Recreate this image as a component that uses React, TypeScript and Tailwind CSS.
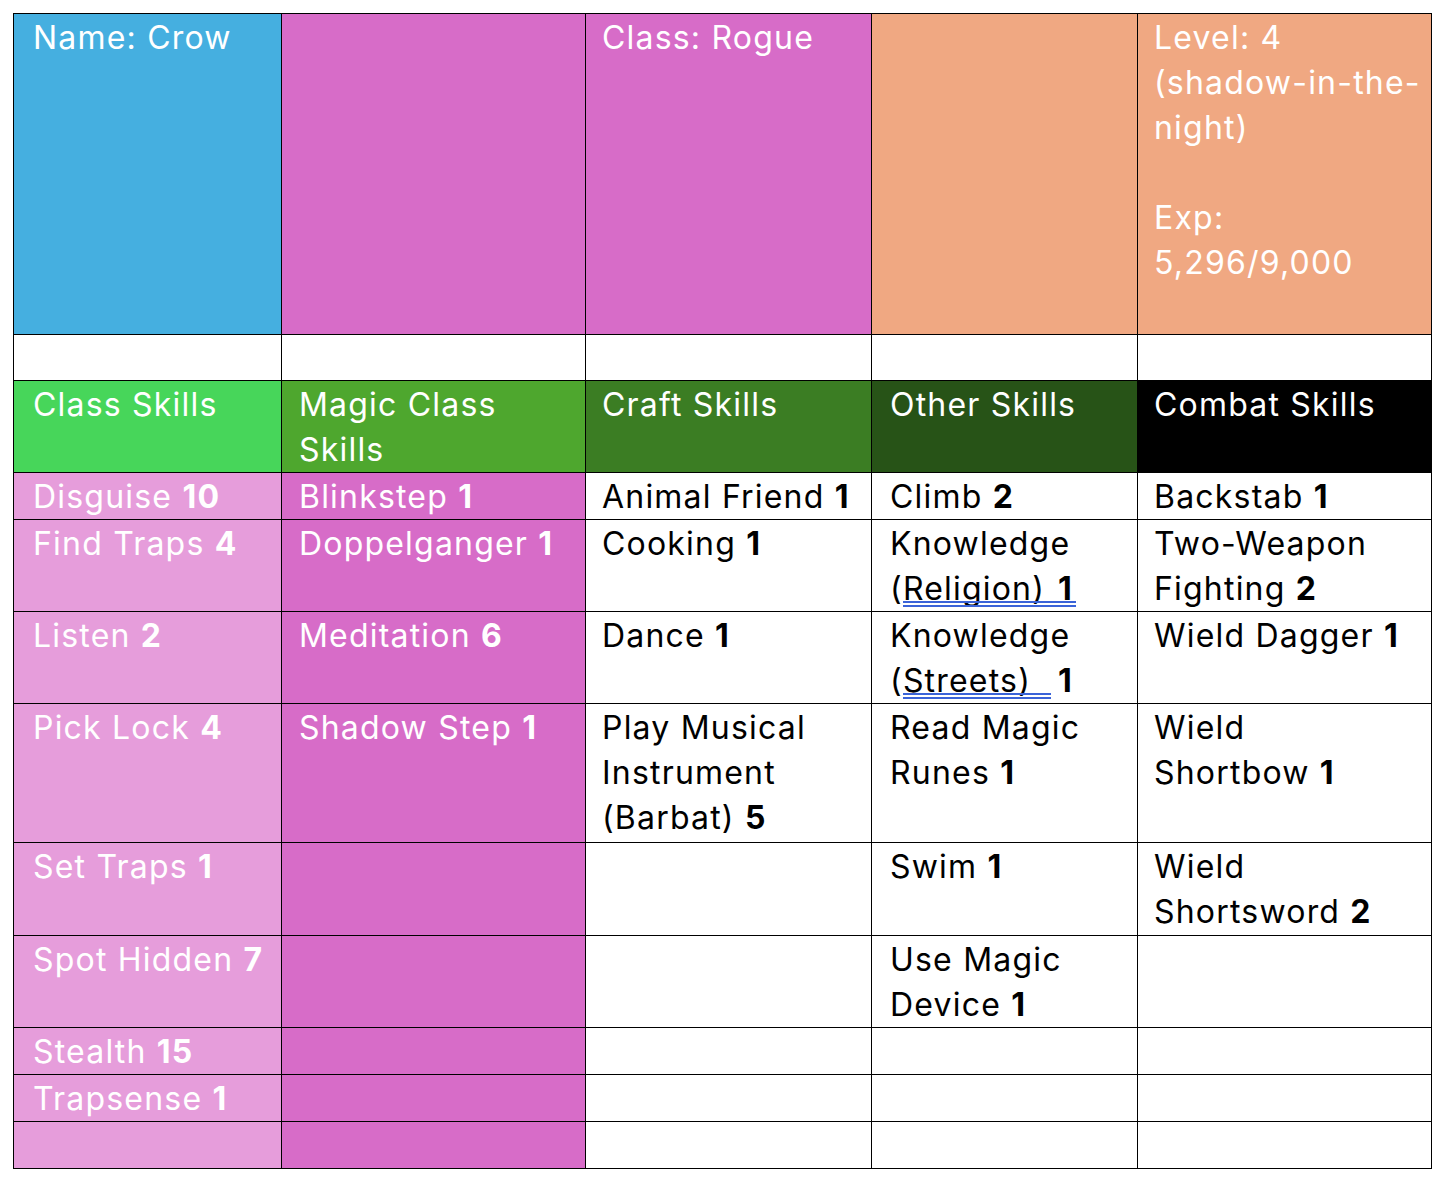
import React from 'react';

type Cell = { bg: string; text?: React.ReactNode; dark?: boolean };

const B = ({ children }: { children: React.ReactNode }) => <b className="font-bold">{children}</b>;

// Word's blue double "grammar" underline
const Squiggle = ({ children }: { children: React.ReactNode }) => (
  <span className="relative">
    {children}
    <span className="absolute left-0 right-0 bottom-[1px] h-[6px] border-y-2 border-[#3a63d8]" />
  </span>
);

const cols = [
  'w-[268px] pl-[19px]',
  'w-[304px] pl-[17px]',
  'w-[286px] pl-[16px]',
  'w-[266px] pl-[18px]',
  'w-[294px] pl-[16px]',
];

const rows: { h: string; cells: Cell[] }[] = [
  {
    h: 'h-[321px]',
    cells: [
      { bg: 'bg-[#45afe0]', text: 'Name: Crow' },
      { bg: 'bg-[#d76cc8]' },
      { bg: 'bg-[#d76cc8]', text: 'Class: Rogue' },
      { bg: 'bg-[#f0a882]' },
      {
        bg: 'bg-[#f0a882]',
        text: (
          <>
            Level: 4<br />(shadow-in-the-
            <br />
            night)
            <br />
            <br />
            Exp:
            <br />
            5,296/9,000
          </>
        ),
      },
    ],
  },
  {
    h: 'h-[46px]',
    cells: [{ bg: 'bg-white' }, { bg: 'bg-white' }, { bg: 'bg-white' }, { bg: 'bg-white' }, { bg: 'bg-white' }],
  },
  {
    h: 'h-[92px]',
    cells: [
      { bg: 'bg-[#47d65a]', text: 'Class Skills' },
      { bg: 'bg-[#4ea72e]', text: <>Magic Class<br />Skills</> },
      { bg: 'bg-[#3b7d23]', text: 'Craft Skills' },
      { bg: 'bg-[#275317]', text: 'Other Skills' },
      { bg: 'bg-black', text: 'Combat Skills' },
    ],
  },
  {
    h: 'h-[47px]',
    cells: [
      { bg: 'bg-[#e69ddb]', text: <>Disguise <B>10</B></> },
      { bg: 'bg-[#d76cc8]', text: <>Blinkstep <B>1</B></> },
      { bg: 'bg-white', dark: true, text: <>Animal Friend <B>1</B></> },
      { bg: 'bg-white', dark: true, text: <>Climb <B>2</B></> },
      { bg: 'bg-white', dark: true, text: <>Backstab <B>1</B></> },
    ],
  },
  {
    h: 'h-[92px]',
    cells: [
      { bg: 'bg-[#e69ddb]', text: <>Find Traps <B>4</B></> },
      { bg: 'bg-[#d76cc8]', text: <>Doppelganger <B>1</B></> },
      { bg: 'bg-white', dark: true, text: <>Cooking <B>1</B></> },
      {
        bg: 'bg-white',
        dark: true,
        text: (
          <>
            Knowledge
            <br />(
            <Squiggle>
              Religion)<span className="ml-[13px]"><B>1</B></span>
              <span className="inline-block w-[3px]" />
            </Squiggle>
          </>
        ),
      },
      { bg: 'bg-white', dark: true, text: <>Two-Weapon<br />Fighting <B>2</B></> },
    ],
  },
  {
    h: 'h-[92px]',
    cells: [
      { bg: 'bg-[#e69ddb]', text: <>Listen <B>2</B></> },
      { bg: 'bg-[#d76cc8]', text: <>Meditation <B>6</B></> },
      { bg: 'bg-white', dark: true, text: <>Dance <B>1</B></> },
      {
        bg: 'bg-white',
        dark: true,
        text: (
          <>
            Knowledge
            <br />(
            <Squiggle>
              Streets)<span className="inline-block w-[20px]" />
            </Squiggle>
            <span className="ml-[7px]"><B>1</B></span>
          </>
        ),
      },
      { bg: 'bg-white', dark: true, text: <>Wield Dagger <B>1</B></> },
    ],
  },
  {
    h: 'h-[139px]',
    cells: [
      { bg: 'bg-[#e69ddb]', text: <>Pick Lock <B>4</B></> },
      { bg: 'bg-[#d76cc8]', text: <>Shadow Step <B>1</B></> },
      { bg: 'bg-white', dark: true, text: <>Play Musical<br />Instrument<br />(Barbat) <B>5</B></> },
      { bg: 'bg-white', dark: true, text: <>Read Magic<br />Runes <B>1</B></> },
      { bg: 'bg-white', dark: true, text: <>Wield<br />Shortbow <B>1</B></> },
    ],
  },
  {
    h: 'h-[93px]',
    cells: [
      { bg: 'bg-[#e69ddb]', text: <>Set Traps <B>1</B></> },
      { bg: 'bg-[#d76cc8]' },
      { bg: 'bg-white' },
      { bg: 'bg-white', dark: true, text: <>Swim <B>1</B></> },
      { bg: 'bg-white', dark: true, text: <>Wield<br />Shortsword <B>2</B></> },
    ],
  },
  {
    h: 'h-[92px]',
    cells: [
      { bg: 'bg-[#e69ddb]', text: <>Spot Hidden <B>7</B></> },
      { bg: 'bg-[#d76cc8]' },
      { bg: 'bg-white' },
      { bg: 'bg-white', dark: true, text: <>Use Magic<br />Device <B>1</B></> },
      { bg: 'bg-white' },
    ],
  },
  {
    h: 'h-[47px]',
    cells: [
      { bg: 'bg-[#e69ddb]', text: <>Stealth <B>15</B></> },
      { bg: 'bg-[#d76cc8]' },
      { bg: 'bg-white' },
      { bg: 'bg-white' },
      { bg: 'bg-white' },
    ],
  },
  {
    h: 'h-[47px]',
    cells: [
      { bg: 'bg-[#e69ddb]', text: <>Trapsense <B>1</B></> },
      { bg: 'bg-[#d76cc8]' },
      { bg: 'bg-white' },
      { bg: 'bg-white' },
      { bg: 'bg-white' },
    ],
  },
  {
    h: 'h-[47px]',
    cells: [
      { bg: 'bg-[#e69ddb]' },
      { bg: 'bg-[#d76cc8]' },
      { bg: 'bg-white' },
      { bg: 'bg-white' },
      { bg: 'bg-white' },
    ],
  },
];

export default function App() {
  return (
    <div className="min-h-screen bg-white pt-[13px] pl-[13px] font-['Inter','Liberation_Sans',sans-serif]">
      <table className="border-collapse table-fixed w-[1419px]">
        <tbody>
          {rows.map((row, r) => (
            <tr key={r} className={row.h}>
              {row.cells.map((cell, c) => (
                <td
                  key={c}
                  className={`${cols[c]} ${cell.bg} ${
                    cell.dark ? 'text-black' : 'text-white'
                  } border-[1.5px] border-black align-top pr-1 pt-px text-[32px] leading-[45px] tracking-[1.2px] whitespace-nowrap overflow-hidden`}
                >
                  {cell.text}
                </td>
              ))}
            </tr>
          ))}
        </tbody>
      </table>
    </div>
  );
}
